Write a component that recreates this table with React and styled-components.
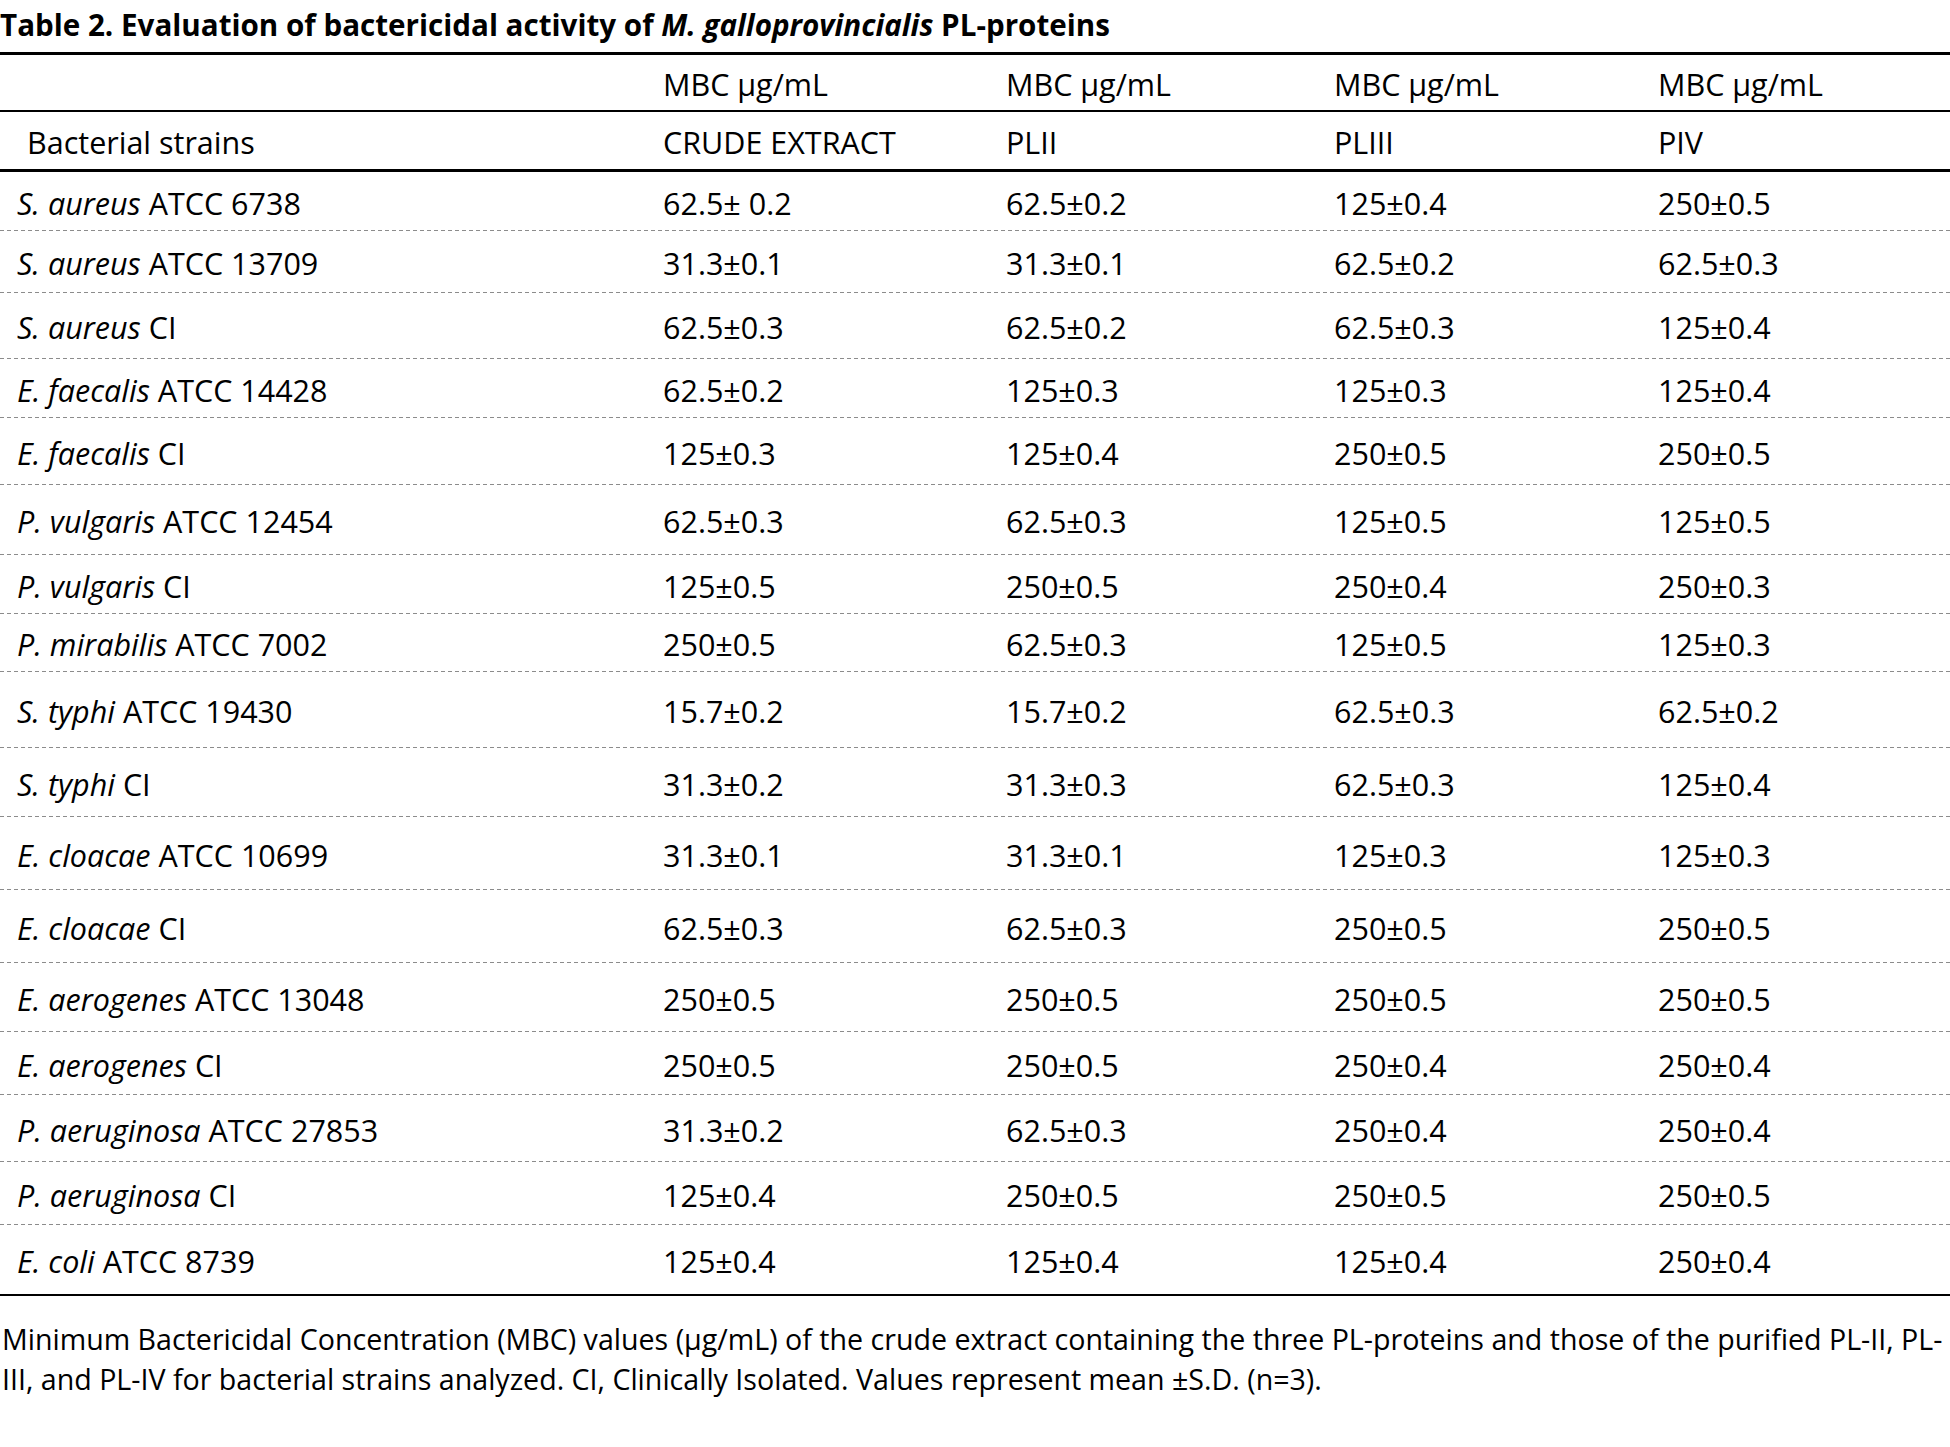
import React from "react";
import styled, { createGlobalStyle } from "styled-components";

const GlobalStyle = createGlobalStyle`
  html, body {
    margin: 0;
    padding: 0;
    background: #fff;
  }
  body {
    font-family: "Open Sans", "Liberation Sans", sans-serif;
    color: #000;
  }
`;

const rows = [
  { sp: "S. aureus", rest: "ATCC 6738", h: 59, v: ["62.5\u00b1 0.2", "62.5\u00b10.2", "125\u00b10.4", "250\u00b10.5"] },
  { sp: "S. aureus", rest: "ATCC 13709", h: 62, v: ["31.3\u00b10.1", "31.3\u00b10.1", "62.5\u00b10.2", "62.5\u00b10.3"] },
  { sp: "S. aureus", rest: "CI", h: 66, v: ["62.5\u00b10.3", "62.5\u00b10.2", "62.5\u00b10.3", "125\u00b10.4"] },
  { sp: "E. faecalis", rest: "ATCC 14428", h: 59, v: ["62.5\u00b10.2", "125\u00b10.3", "125\u00b10.3", "125\u00b10.4"] },
  { sp: "E. faecalis", rest: "CI", h: 67, v: ["125\u00b10.3", "125\u00b10.4", "250\u00b10.5", "250\u00b10.5"] },
  { sp: "P. vulgaris", rest: "ATCC 12454", h: 70, v: ["62.5\u00b10.3", "62.5\u00b10.3", "125\u00b10.5", "125\u00b10.5"] },
  { sp: "P. vulgaris", rest: "CI", h: 59, v: ["125\u00b10.5", "250\u00b10.5", "250\u00b10.4", "250\u00b10.3"] },
  { sp: "P. mirabilis", rest: "ATCC 7002", h: 58, v: ["250\u00b10.5", "62.5\u00b10.3", "125\u00b10.5", "125\u00b10.3"] },
  { sp: "S. typhi", rest: "ATCC 19430", h: 76, v: ["15.7\u00b10.2", "15.7\u00b10.2", "62.5\u00b10.3", "62.5\u00b10.2"] },
  { sp: "S. typhi", rest: "CI", h: 69, v: ["31.3\u00b10.2", "31.3\u00b10.3", "62.5\u00b10.3", "125\u00b10.4"] },
  { sp: "E. cloacae", rest: "ATCC 10699", h: 73, v: ["31.3\u00b10.1", "31.3\u00b10.1", "125\u00b10.3", "125\u00b10.3"] },
  { sp: "E. cloacae", rest: "CI", h: 73, v: ["62.5\u00b10.3", "62.5\u00b10.3", "250\u00b10.5", "250\u00b10.5"] },
  { sp: "E. aerogenes", rest: "ATCC 13048", h: 69, v: ["250\u00b10.5", "250\u00b10.5", "250\u00b10.5", "250\u00b10.5"] },
  { sp: "E. aerogenes", rest: "CI", h: 63, v: ["250\u00b10.5", "250\u00b10.5", "250\u00b10.4", "250\u00b10.4"] },
  { sp: "P. aeruginosa", rest: "ATCC 27853", h: 67, v: ["31.3\u00b10.2", "62.5\u00b10.3", "250\u00b10.4", "250\u00b10.4"] },
  { sp: "P. aeruginosa", rest: "CI", h: 63, v: ["125\u00b10.4", "250\u00b10.5", "250\u00b10.5", "250\u00b10.5"] },
  { sp: "E. coli", rest: "ATCC 8739", h: 69, v: ["125\u00b10.4", "125\u00b10.4", "125\u00b10.4", "250\u00b10.4"], last: true },
];

const columns = ["CRUDE EXTRACT", "PLII", "PLIII", "PIV"];

const App = () => {
  return (
    <>
      <GlobalStyle />
      <Page>
        <Title>
          Table 2. Evaluation of bactericidal activity of <em>M. galloprovincialis</em> PL-proteins
        </Title>
        <Table>
          <HeadRow $h={57} $rule="2px solid #000">
            <Cell />
            {columns.map((c) => (
              <Cell key={c}>MBC µg/mL</Cell>
            ))}
          </HeadRow>
          <HeadRow $h={60} $rule="3px solid #000">
            <Cell $indent>Bacterial strains</Cell>
            {columns.map((c) => (
              <Cell key={c}>{c}</Cell>
            ))}
          </HeadRow>
          {rows.map((r, i) => (
            <BodyRow key={i} $h={r.h} $last={r.last}>
              <Cell>
                <Species>{r.sp}</Species>&nbsp;{r.rest}
              </Cell>
              {r.v.map((val, j) => (
                <Cell key={j}>{val}</Cell>
              ))}
            </BodyRow>
          ))}
        </Table>
        <Caption>
          <CaptionLine>
            Minimum Bactericidal Concentration (MBC) values (µg/mL) of the crude extract containing the three PL-proteins and those of the purified PL-II, PL-
          </CaptionLine>
          <CaptionLine>
            III, and PL-IV for bacterial strains analyzed. CI, Clinically Isolated. Values represent mean ±S.D. (n=3).
          </CaptionLine>
        </Caption>
      </Page>
    </>
  );
};

const Page = styled.div`
  width: 1950px;
  min-height: 1447px;
  background: #fff;
`;

const Title = styled.h1`
  margin: 0;
  height: 52px;
  font-size: 29.6px;
  line-height: 50px;
  font-weight: 700;
  white-space: nowrap;
  em {
    font-style: italic;
  }
`;

const Table = styled.div`
  border-top: 3px solid #000;
  border-bottom: 2px solid #000;
`;

const Grid = styled.div`
  display: grid;
  grid-template-columns: 646px 343px 328px 324px 1fr;
  box-sizing: border-box;
  height: ${(p) => p.$h}px;
  font-size: 30.5px;
  line-height: 1;
`;

const HeadRow = styled(Grid)`
  border-bottom: ${(p) => p.$rule};
`;

const BodyRow = styled(Grid)`
  background: ${(p) =>
    p.$last
      ? "none"
      : "linear-gradient(to right, #8c8c8c 55%, transparent 0) left bottom / 7px 1px repeat-x"};
`;

const Cell = styled.div`
  display: flex;
  align-items: center;
  padding: 3px 0 0 ${(p) => (p.$indent ? 27 : 17)}px;
  white-space: nowrap;
`;

const Species = styled.em`
  font-style: italic;
`;

const Caption = styled.div`
  margin-top: 23px;
  padding-left: 2px;
  font-size: 28.6px;
  line-height: 40px;
`;

const CaptionLine = styled.div`
  white-space: nowrap;
`;

export default App;
